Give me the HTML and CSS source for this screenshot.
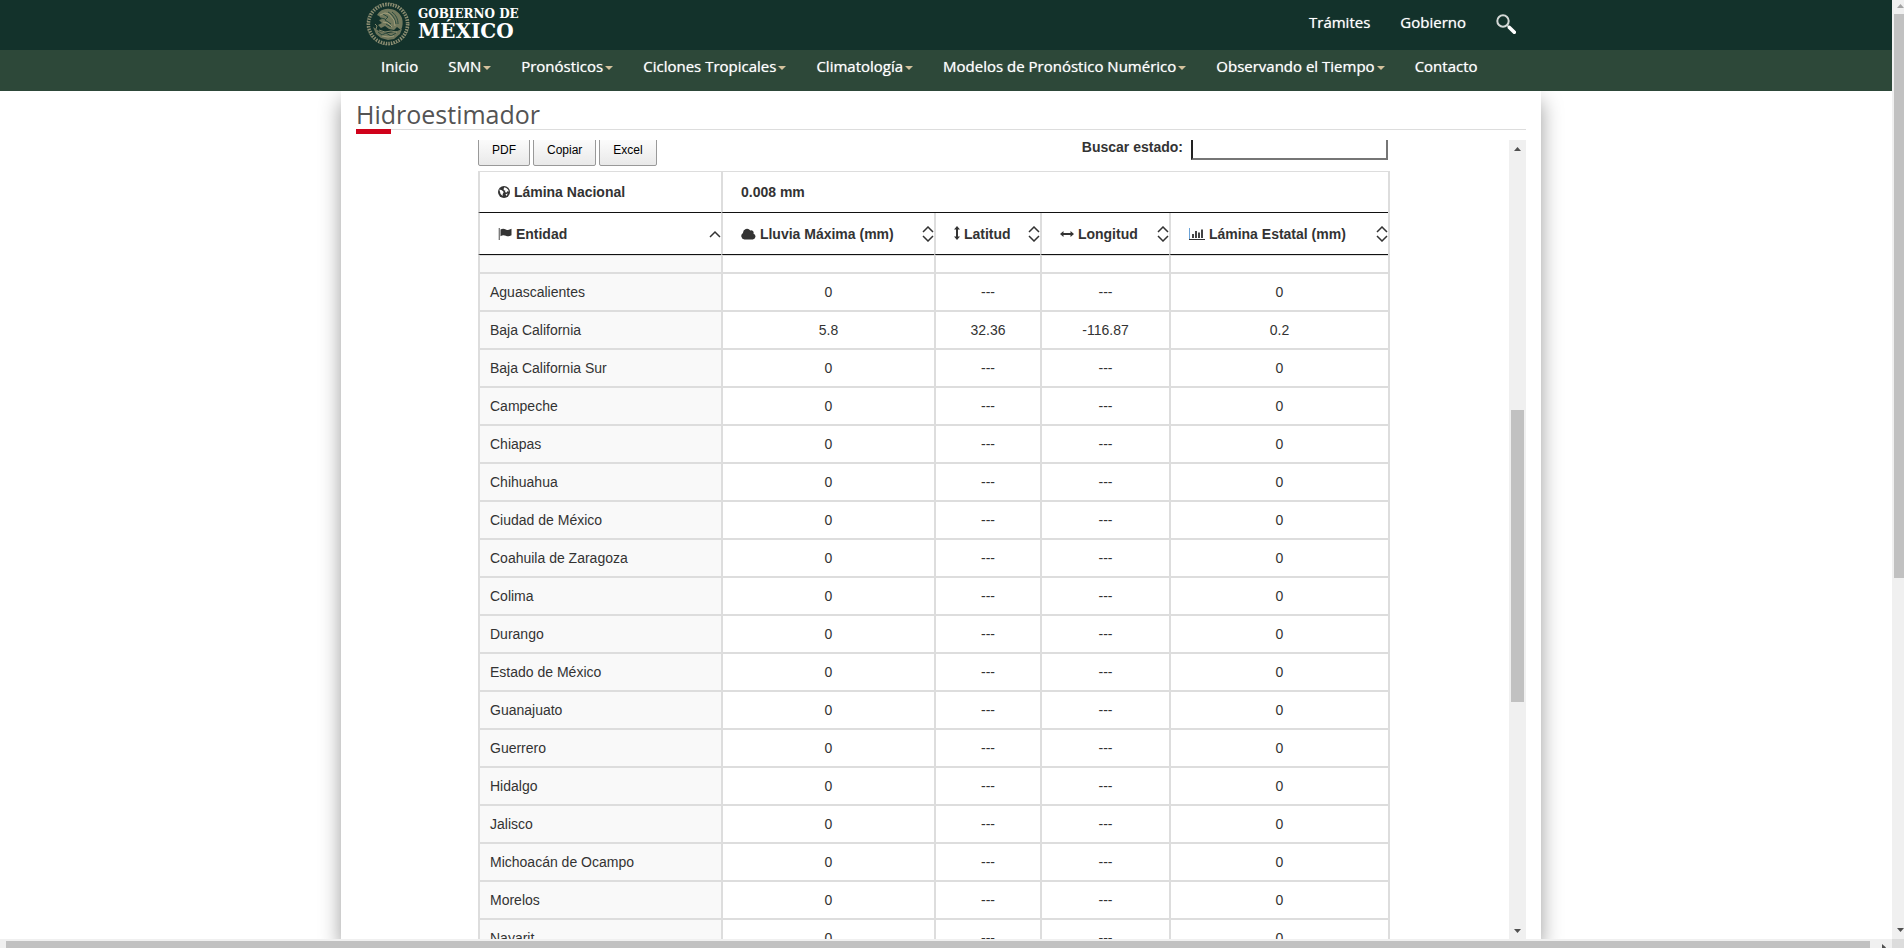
FILE: index.html
```html
<!DOCTYPE html>
<html lang="es">
<head>
<meta charset="utf-8">
<title>Hidroestimador</title>
<link rel="stylesheet" href="styles.css">
</head>
<body>
<div class="page">
  <header class="header">
    <div class="topbar">
      <div class="container topbar-row">
        <a class="brand" href="#">
          <svg class="seal" viewBox="0 0 44 44" aria-hidden="true">
            <g fill="none" stroke="#a8a282">
              <circle cx="22" cy="22" r="19.5" stroke-width="3.4" stroke-dasharray="1.5 1.1" opacity=".8"/>
              <circle cx="22" cy="22" r="21" stroke-width="1" stroke-dasharray="2 1.4" opacity=".55"/>
            </g>
            <g fill="#8c8c6c">
              <path d="M11 13c3-5 8-7 13-6 5 0 10 4 12 9 1 4 1 8-1 12l-4-3-3 3-5-1-4-3-4 2-3-3 4-2-3-3 3-1-3-3z" opacity=".8"/>
              <path d="M7 25l6 4 4 1 5 1 7-1 7-3-2 5-6 5-6 1-7-2-5-4z" opacity=".75"/>
            </g>
            <g fill="none" stroke="#21443a" stroke-width=".9">
              <path d="M17 12l5 3-3 3 6 4M22 10c4 2 7 6 8 12M26 10c4 3 6 7 6 12M15 16l4 1M20 22l5 3M12 30l4 3 4-2 5 3 5-3"/>
            </g>
            <g fill="none" stroke="#b5ad87" stroke-width=".7">
              <path d="M14 13l5-2 4 1 5 6 1 6M17 20l5 1 4 4M13 28l6 2 6-1 6 1M16 34l6 1 6-1M9 22l2 2-1 3"/>
            </g>
          </svg>
          <span class="brand-text"><span class="brand-small">GOBIERNO DE</span><span class="brand-big">MÉXICO</span></span>
        </a>
        <nav class="toplinks">
          <a href="#">Trámites</a>
          <a href="#">Gobierno</a>
          <a href="#" aria-label="Buscar">
            <svg class="search-icon" viewBox="0 0 20 20"><circle cx="7" cy="7" r="5.7" fill="none" stroke="#d3d8d6" stroke-width="2"/><path d="M11.2 11.2l2 2" stroke="#d3d8d6" stroke-width="1.6"/><path d="M13.4 13.4l4.9 4.9" stroke="#fff" stroke-width="3.6" stroke-linecap="round"/></svg>
          </a>
        </nav>
      </div>
    </div>
    <div class="menubar">
      <nav class="container menu">
        <a href="#">Inicio</a>
        <a class="drop" href="#">SMN</a>
        <a class="drop" href="#">Pronósticos</a>
        <a class="drop" href="#">Ciclones Tropicales</a>
        <a class="drop" href="#">Climatología</a>
        <a class="drop" href="#">Modelos de Pronóstico Numérico</a>
        <a class="drop" href="#">Observando el Tiempo</a>
        <a href="#">Contacto</a>
      </nav>
    </div>
  </header>

  <div class="stage">
  <main class="card">
    <h1 class="title">Hidroestimador</h1>
    <div class="scroller">
      <div class="content">
        <div class="tools">
          <div class="buttons">
            <button type="button">PDF</button>
            <button type="button">Copiar</button>
            <button type="button">Excel</button>
          </div>
          <div class="search">
            <label for="estado">Buscar estado:</label>
            <input id="estado" type="text">
          </div>
        </div>
        <table class="grid">
          <colgroup><col class="c-name"><col class="c-rain"><col class="c-lat"><col class="c-lon"><col class="c-sheet"></colgroup>
          <thead>
            <tr class="summary">
              <th><svg class="ico" width="12" height="12" viewBox="0 0 12 12"><circle cx="6" cy="6" r="6" fill="#333"/><path d="M6.3 1.2l2 .7 1.700 1.600.9 2-1.600-.3-1 1.500-1.200-.8.2-1.300-1.400-.4-.3-1.200zM1.300 3.600l2.600.6 1.800 1.800-1 2-.1 2L2.600 8zM7.500 8.300l2.300-.9-1.300 2.600z" fill="#fff"/></svg> Lámina Nacional</th>
              <th colspan="4">0.008 mm</th>
            </tr>
            <tr>
              <th><svg class="ico" width="14" height="12" viewBox="0 0 14 12"><path d="M1.3 0v12" stroke="#777" stroke-width="1.3"/><path d="M2.5 1.6c2-1.3 3.500-1 5.300-.2 2 .9 3.500.5 5.700-.6v6.400c-2 1.200-3.700 1.400-5.700.5-1.800-.8-3.500-.7-5.300.5z" fill="#333"/></svg> Entidad<svg class="sort" viewBox="0 0 12 16"><path d="M1 11l5-5 5 5"/></svg></th>
              <th><svg class="ico" width="15" height="12" viewBox="0 0 15 12"><path d="M3.500 11.500A3.500 3.500 0 0 1 2 5 4 4 0 0 1 9.300 2.500a2.500 2.500 0 0 1 3.200 3.200 3 3 0 0 1-.6 5.800z" fill="#333"/></svg> Lluvia Máxima (mm)<svg class="sort" viewBox="0 0 12 16"><path d="M1 6l5-5 5 5M1 10l5 5 5-5"/></svg></th>
              <th><svg class="ico" width="6" height="14" viewBox="0 0 6 14"><path d="M3 0l3 3.500H4v7h2L3 14 0 10.500h2v-7H0z" fill="#333"/></svg> Latitud<svg class="sort" viewBox="0 0 12 16"><path d="M1 6l5-5 5 5M1 10l5 5 5-5"/></svg></th>
              <th><svg class="ico" width="14" height="12" viewBox="0 0 14 12"><path d="M0 6l3.500-3v2h7V3L14 6l-3.500 3V7h-7v2z" fill="#333"/></svg> Longitud<svg class="sort" viewBox="0 0 12 16"><path d="M1 6l5-5 5 5M1 10l5 5 5-5"/></svg></th>
              <th><svg class="ico" width="16" height="12" viewBox="0 0 16 12"><path d="M.5 0v11.500" fill="none" stroke="#6ba3d8"/><path d="M0 11.500H16" stroke="#333"/><path d="M3 6h2v4H3zM6 3h2v7H6zM9 4.500h2V10H9zM12 1.500h2V10h-2z" fill="#444"/></svg> Lámina Estatal (mm)<svg class="sort" viewBox="0 0 12 16"><path d="M1 6l5-5 5 5M1 10l5 5 5-5"/></svg></th>
            </tr>
          </thead>
          <tbody>
            <tr class="partial"><td></td><td></td><td></td><td></td><td></td></tr>
            <tr><td>Aguascalientes</td><td>0</td><td>---</td><td>---</td><td>0</td></tr>
            <tr><td>Baja California</td><td>5.8</td><td>32.36</td><td>-116.87</td><td>0.2</td></tr>
            <tr><td>Baja California Sur</td><td>0</td><td>---</td><td>---</td><td>0</td></tr>
            <tr><td>Campeche</td><td>0</td><td>---</td><td>---</td><td>0</td></tr>
            <tr><td>Chiapas</td><td>0</td><td>---</td><td>---</td><td>0</td></tr>
            <tr><td>Chihuahua</td><td>0</td><td>---</td><td>---</td><td>0</td></tr>
            <tr><td>Ciudad de México</td><td>0</td><td>---</td><td>---</td><td>0</td></tr>
            <tr><td>Coahuila de Zaragoza</td><td>0</td><td>---</td><td>---</td><td>0</td></tr>
            <tr><td>Colima</td><td>0</td><td>---</td><td>---</td><td>0</td></tr>
            <tr><td>Durango</td><td>0</td><td>---</td><td>---</td><td>0</td></tr>
            <tr><td>Estado de México</td><td>0</td><td>---</td><td>---</td><td>0</td></tr>
            <tr><td>Guanajuato</td><td>0</td><td>---</td><td>---</td><td>0</td></tr>
            <tr><td>Guerrero</td><td>0</td><td>---</td><td>---</td><td>0</td></tr>
            <tr><td>Hidalgo</td><td>0</td><td>---</td><td>---</td><td>0</td></tr>
            <tr><td>Jalisco</td><td>0</td><td>---</td><td>---</td><td>0</td></tr>
            <tr><td>Michoacán de Ocampo</td><td>0</td><td>---</td><td>---</td><td>0</td></tr>
            <tr><td>Morelos</td><td>0</td><td>---</td><td>---</td><td>0</td></tr>
            <tr><td>Nayarit</td><td>0</td><td>---</td><td>---</td><td>0</td></tr>
          </tbody>
        </table>
      </div>
      <div class="bar inner-bar">
        <svg class="arrow" viewBox="0 0 7 4"><path d="M0 4l3.500-4L7 4z"/></svg>
        <div class="track"><div class="space-before"></div><div class="thumb"></div><div class="space-after"></div></div>
        <svg class="arrow" viewBox="0 0 7 4"><path d="M0 0l3.500 4L7 0z"/></svg>
      </div>
    </div>
  </main>
  </div>
</div>
<div class="bar page-bar">
  <svg class="arrow faint" viewBox="0 0 7 4"><path d="M0 4l3.500-4L7 4z"/></svg>
  <div class="track"><div class="thumb"></div><div class="space-after"></div></div>
  <svg class="arrow" viewBox="0 0 7 4"><path d="M0 0l3.500 4L7 0z"/></svg>
</div>
<div class="page-hbar">
  <div class="hthumb"></div>
  <svg class="harrow" viewBox="0 0 4 7"><path d="M0 0l4 3.500L0 7z"/></svg>
</div>
<div class="corner"></div>
</body>
</html>
```
FILE: styles.css
```css
* { box-sizing: border-box; }

body {
  margin: 0;
  height: 100vh;
  display: grid;
  grid-template: minmax(0, 1fr) 9px / minmax(0, 1fr) 12px;
  overflow: hidden;
  background: #fff;
  color: #333;
  font: 14px/20px "Liberation Sans", Arial, sans-serif;
}

.page {
  display: flex;
  flex-direction: column;
  min-height: 0;
  overflow: hidden;
}

/* Header */
.header {
  position: relative;
  z-index: 1;
  font: 500 15px/20px "Open Sans", sans-serif;
}
.header a { color: #fff; text-decoration: none; }
.toplinks, .menu { text-shadow: 0 0 1px rgba(255, 255, 255, .7); }
.container { max-width: 1170px; margin: 0 auto; }
.topbar { background: #13322b; }
.topbar-row {
  height: 50px;
  padding: 0 15px 0 5px;
  display: flex;
  justify-content: space-between;
}
.brand { display: flex; gap: 8px; padding-top: 2px; }
.seal { width: 44px; height: 44px; }
.brand-text {
  display: flex;
  flex-direction: column;
  padding-top: 6px;
  font-family: "DejaVu Serif", serif;
  font-weight: 700;
}
.brand-small { font-size: 12px; line-height: 13px; }
.brand-big { font-size: 20px; line-height: 20px; }
.toplinks {
  display: flex;
  gap: 30px;
  padding-top: 12px;
}
.search-icon { display: block; width: 20px; height: 20px; margin-top: 2px; }
.menubar { background: #2d4839; }
.menu {
  display: flex;
  gap: 30px;
  height: 41px;
  padding: 6px 20px 0;
  white-space: nowrap;
}
.drop::after {
  content: "";
  display: inline-block;
  margin-left: 2px;
  vertical-align: middle;
  border: 4px solid transparent;
  border-top-color: #d4c19c;
  border-bottom: 0;
}

/* Card */
.stage {
  flex: 1;
  min-height: 0;
  display: flex;
  padding-right: 10px;
}
.card {
  width: 100%;
  max-width: 1200px;
  margin: 0 auto;
  padding: 9px 15px 0;
  display: flex;
  flex-direction: column;
  background: #fff;
  box-shadow: 0 10px 20px rgba(0, 0, 0, .4);
}
.title {
  position: relative;
  margin: 0 0 10px;
  border-bottom: 1px solid #ddd;
  color: #545454;
  font: 400 25px/29px "Open Sans", sans-serif;
}
.title::after {
  content: "";
  position: absolute;
  left: 0;
  top: 100%;
  width: 35px;
  height: 5px;
  background: #d0021b;
}
.scroller {
  flex: 1;
  min-height: 0;
  display: flex;
  overflow: hidden;
}
.content {
  flex: 1;
  padding: 0 119px 0 122px;
}

/* Table tools */
.tools {
  display: flex;
  justify-content: space-between;
  height: 31px;
  padding-right: 2px;
}
.buttons { display: flex; gap: 3px; align-items: flex-end; padding-bottom: 5px; }
.buttons button {
  height: 32px;
  flex: none;
  padding: 0 13px;
  border: 1px solid #999;
  border-radius: 2px;
  background: linear-gradient(#fff, #e9e9e9);
  color: #000;
  font: 12px/20px "Liberation Sans", Arial, sans-serif;
}
.search { display: flex; gap: 8px; align-items: flex-end; padding-bottom: 11px; }
.search label { font-weight: 700; line-height: 26px; }
.search input {
  width: 197px;
  height: 26px;
  border: 2px solid #767676;
  border-left-color: #222;
  border-top-color: #222;
}

/* Table */
.grid {
  width: 100%;
  table-layout: fixed;
  border-collapse: separate;
  border-spacing: 0;
  border: solid #ddd;
  border-width: 1px 2px 0 0;
}
.c-name { width: 243px; }
.c-rain { width: 213px; }
.c-lat { width: 106px; }
.c-lon { width: 129px; }
.grid th, .grid td { border-left: 2px solid #ddd; }
.grid th {
  position: relative;
  height: 42px;
  padding: 0 17px 0 18px;
  border-bottom: 1px solid #111;
  text-align: left;
  white-space: nowrap;
}
.grid .summary th { height: 41px; }
.grid td {
  height: 38px;
  padding: 0 10px;
  border-bottom: 2px solid #ddd;
  text-align: center;
}
.grid td:first-child { background: #f9f9f9; text-align: left; }
.grid .partial td { height: 19px; border-top: 1px solid #ddd; }
.ico { vertical-align: -1px; }
.sort {
  position: absolute;
  right: 0;
  top: 13px;
  width: 12px;
  height: 16px;
  fill: none;
  stroke: #333;
  stroke-width: 1.5;
}

/* Scroll bars */
.bar {
  display: flex;
  flex-direction: column;
  align-items: center;
  background: #f0f0f0;
}
.arrow { width: 7px; height: 4px; fill: #505050; flex: none; }
.faint { fill: #a3a3a3; }
.track { flex: 1; display: flex; flex-direction: column; align-self: stretch; }
.thumb { background: #c1c1c1; }
.inner-bar { width: 17px; padding: 7px 0 6px; }
.inner-bar .track { padding: 0 2px; }
.inner-bar .space-before { flex: 259; }
.inner-bar .thumb { flex: 292; }
.inner-bar .space-after { flex: 227; }
.page-bar { padding: 4px 0 7px; overflow: hidden; }
.page-bar .arrow { margin-left: 5px; }
.page-bar .track { padding: 6px 0 0 2px; }
.page-bar .thumb { flex: 563; }
.page-bar .space-after { flex: 350; }
.page-hbar {
  display: flex;
  align-items: flex-start;
  padding-top: 2px;
  background: #f0f0f0;
  overflow: hidden;
}
.hthumb { flex: 1; height: 7px; margin-left: 6px; background: #c1c1c1; }
.harrow { width: 4px; height: 7px; margin: 3px 6px 0 12px; fill: #505050; }
.corner { background: #dcdcdc; }
```
